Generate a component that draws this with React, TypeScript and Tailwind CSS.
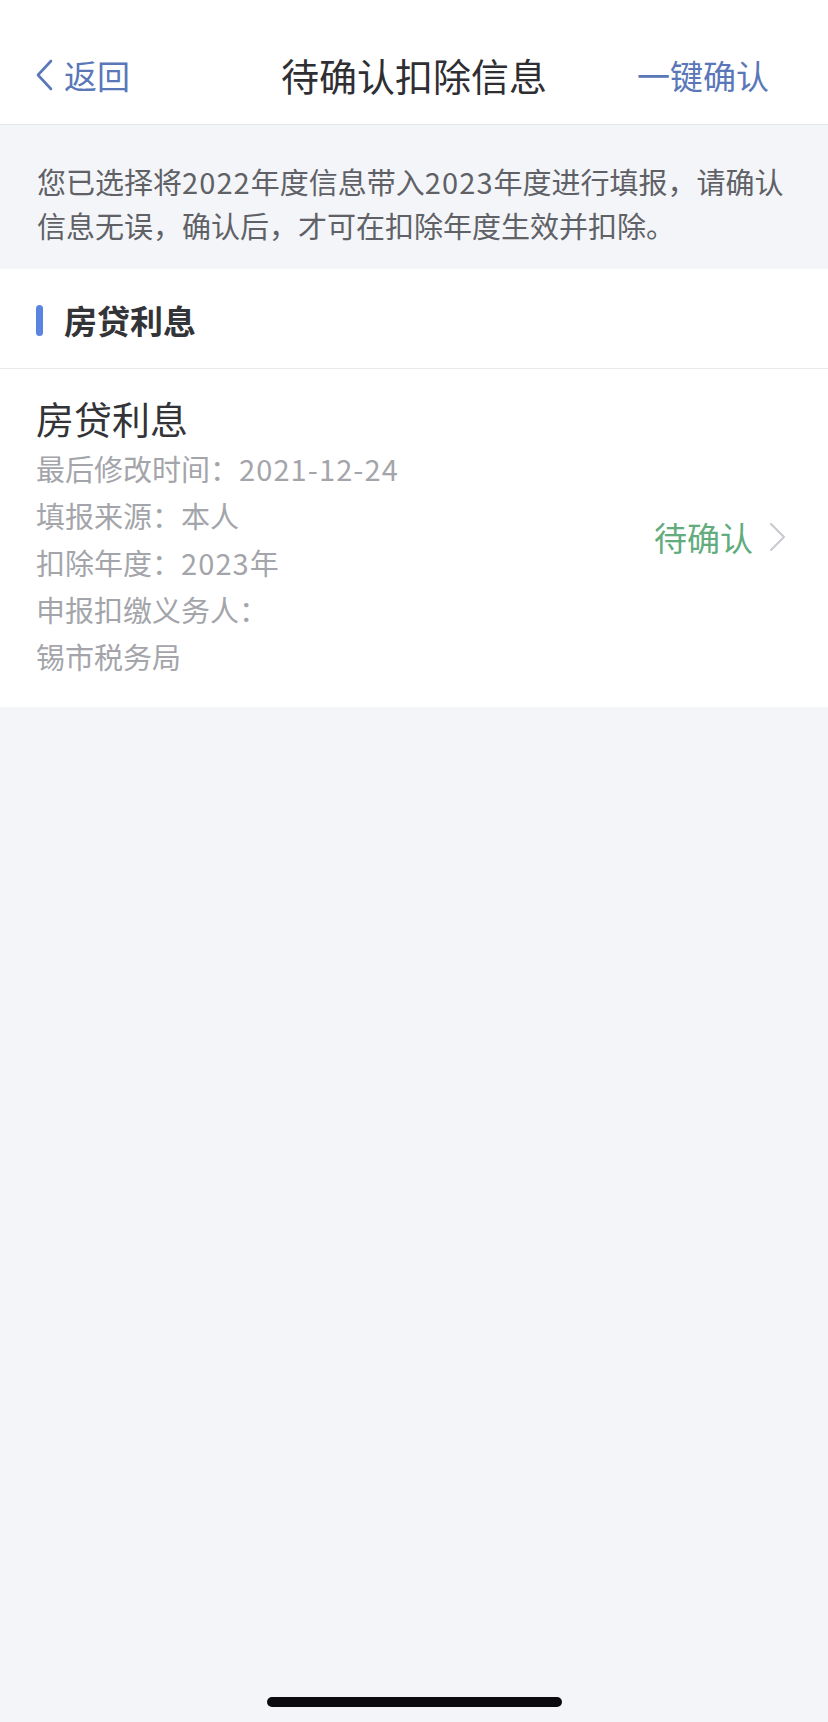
const DETAILS = ['最后修改时间：2021-12-24', '填报来源：本人', '扣除年度：2023年', '申报扣缴义务人：', '锡市税务局'];

// digits in the reference font run a little wider than Noto's
function Wide({ text }: { text: string }) {
    return (
        <>
            {text.split(/(\d[\d-]*)/).map((part, i) =>
                /\d/.test(part) ? (
                    <span key={i} className="tracking-[1.1px]">{part}</span>
                ) : (
                    <span key={i}>{part}</span>
                ),
            )}
        </>
    );
}

export default function App() {
    return (
        <div
            className="relative min-h-[1722px] w-[828px] bg-[#f3f5f9]"
            style={{ fontFamily: '"Noto Sans CJK SC", "Noto Sans", sans-serif' }}
        >
            {/* Nav bar */}
            <header className="h-[125px] bg-white border-b border-[#e4e6eb] pt-[48px]">
                <div className="grid grid-cols-[1fr_auto_1fr] items-center h-[54px] px-[35px]">
                    <a className="flex items-center gap-[10px] text-[33px] leading-none text-[#5a77b8]">
                        <svg width="19" height="32" viewBox="0 0 19 32" fill="none">
                            <path d="M16 2 L3 16 L16 30" stroke="#5a77b8" strokeWidth="2.6" strokeLinecap="round" strokeLinejoin="round" />
                        </svg>
                        返回
                    </a>
                    <h1 className="text-[38px] leading-none text-[#2f2f33] font-normal">待确认扣除信息</h1>
                    <div className="flex justify-end pr-[24px]">
                        <span className="text-[33px] leading-none text-[#5a77b8]">一键确认</span>
                    </div>
                </div>
            </header>

            {/* Notice */}
            <div className="pl-[37px] pr-[30px] pt-[34px] pb-[22px] text-[29px] leading-[44px] text-[#5f6166]">
                您已选择将<Wide text="2022" />年度信息带入<Wide text="2023" />年度进行填报，请确认信息无误，确认后，才可在扣除年度生效并扣除。
            </div>

            {/* Section header */}
            <div className="h-[100px] bg-white border-b border-[#e8e9ec] flex items-center pt-[4px] px-[36px] gap-[21px]">
                <span className="w-[7px] h-[31px] rounded-full bg-[#5b83e0]" />
                <span className="text-[33px] leading-none font-bold text-[#333438]">房贷利息</span>
            </div>

            {/* Item */}
            <div className="bg-white flex items-center pl-[36px] pr-[42px] pt-[25px] pb-[27px]">
                <div className="flex-1">
                    <div className="text-[38px] leading-[48px] text-[#333438] mb-[3px]">房贷利息</div>
                    {DETAILS.map((d) => (
                        <div key={d} className="text-[29px] leading-[47px] text-[#a3a5aa]">
                            <Wide text={d} />
                        </div>
                    ))}
                </div>
                <div className="flex items-center gap-[16px]">
                    <span className="text-[33px] leading-none text-[#62ac7e]">待确认</span>
                    <svg width="17" height="30" viewBox="0 0 17 30" fill="none">
                        <path d="M2 2 L15 15 L2 28" stroke="#c9cbd0" strokeWidth="2.2" strokeLinecap="round" strokeLinejoin="round" />
                    </svg>
                </div>
            </div>

            {/* Home indicator */}
            <div className="absolute left-[267px] top-[1697px] w-[295px] h-[10px] rounded-full bg-[#0a0a0f]" />
        </div>
    );
}
